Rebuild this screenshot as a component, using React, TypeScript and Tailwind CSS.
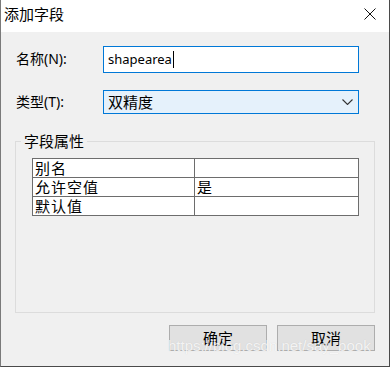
import React from "react"

const cjk = { fontFamily: '"Noto Sans", "Noto Sans CJK SC", sans-serif' }

function CloseIcon() {
  return (
    <svg width="12" height="12" viewBox="0 0 12 12" className="block">
      <path d="M0.5 0.5 L11.5 11.5 M11.5 0.5 L0.5 11.5" stroke="#111" strokeWidth="1" fill="none" />
    </svg>
  )
}

function Chevron() {
  return (
    <svg width="11" height="6" viewBox="0 0 11 6" className="block">
      <path d="M0.5 0.5 L5.5 5.5 L10.5 0.5" stroke="#333" strokeWidth="1.1" fill="none" />
    </svg>
  )
}

const rows = [
  { name: "别名", value: "" },
  { name: "允许空值", value: "是" },
  { name: "默认值", value: "" },
]

export default function App() {
  return (
    <div className="w-[390px] h-[367px] relative flex flex-col bg-[#f0f0f0] border-l border-l-[#7a7a7a] border-r border-r-[#4a4a4a] border-b border-b-[#4a4a4a] overflow-hidden" style={cjk}>
      {/* title bar */}
      <div className="h-[32px] bg-white flex items-center justify-between pl-[3px] pr-[13px] shrink-0">
        <span className="text-[15px] leading-none text-black -mt-[4px]">添加字段</span>
        <div className="-mt-[4px]"><CloseIcon /></div>
      </div>

      {/* body */}
      <div className="flex flex-col">
        <div className="flex items-center mt-[14px] h-[27px]">
          <span className="w-[102px] shrink-0 pl-[15px] text-[14px] text-black -mt-[2px]">名称(N):</span>
          <div className="w-[256px] h-[27px] bg-white border border-[#0078d7] flex items-center pl-[4px]">
            <span className="text-[13px] text-black leading-none">shapearea</span>
            <span className="w-px h-[17px] bg-black ml-[1px]" />
          </div>
        </div>

        <div className="flex items-center mt-[17px] h-[24px]">
          <span className="w-[102px] shrink-0 pl-[15px] text-[14px] text-black -mt-[2px]">类型(T):</span>
          <div className="w-[256px] h-[24px] bg-[#e5f1fb] border border-[#0078d7] flex items-center justify-between pl-[4px] pr-[5px]">
            <span className="text-[15px] text-black leading-none">双精度</span>
            <Chevron />
          </div>
        </div>

        <fieldset className="ml-[14px] mt-[18px] w-[360px] h-[181px] border border-[#dcdcdc] px-[5px] pt-0">
          <legend className="px-[3px] text-[15px] leading-[18px] text-black">字段属性</legend>
          <div className="ml-[11px] mt-[8px] w-[327px] border-t border-l border-[#6d6d6d]">
            {rows.map((r) => (
              <div key={r.name} className="flex h-[19px]">
                <div className="w-[162px] border-r border-b border-[#6d6d6d] bg-white pl-[2px] text-[15px] leading-[18px] tracking-[1px] text-black">{r.name}</div>
                <div className="w-[164px] border-r border-b border-[#6d6d6d] bg-white pl-[2px] text-[15px] leading-[18px] text-black">{r.value}</div>
              </div>
            ))}
          </div>
        </fieldset>

        <div className="flex justify-end gap-[10px] mt-[12px] mr-[14px]">
          <button className="w-[98px] h-[26px] bg-[#e1e1e1] border border-[#adadad] text-[15px] text-black leading-none">确定</button>
          <button className="w-[98px] h-[26px] bg-[#e1e1e1] border border-[#adadad] text-[15px] text-black leading-none">取消</button>
        </div>
      </div>

      {/* watermark */}
      <span className="absolute left-[167px] top-[338px] text-[15px] leading-none text-white/80 whitespace-nowrap" style={{ fontFamily: '"Liberation Sans", sans-serif', textShadow: "0 0 1px rgba(0,0,0,0.15)" }}>
        https://blog.csdn.net/say_book
      </span>
    </div>
  )
}
